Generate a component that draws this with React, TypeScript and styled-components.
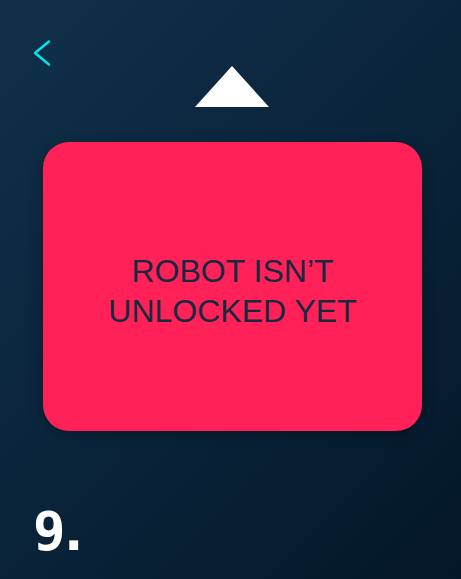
import React from "react";
import styled, { createGlobalStyle } from "styled-components";

const GlobalStyle = createGlobalStyle`
    html, body {
        margin: 0;
        padding: 0;
        background: #061a2e;
    }
`;

const Screen = styled.div`
    width: 461px;
    height: 579px;
    box-sizing: border-box;
    background: linear-gradient(135deg, #10304a 0%, #0a243a 50%, #041729 100%);
    display: flex;
    flex-direction: column;
    padding: 40px 0 0 0;
    overflow: hidden;
    font-family: "Liberation Sans", Arial, sans-serif;
`;

const TopBar = styled.div`
    height: 26px;
    padding-left: 33px;
    display: flex;
    align-items: center;
`;

const BackButton = styled.button`
    border: 0;
    background: transparent;
    padding: 0;
    width: 18px;
    height: 26px;
    cursor: pointer;
    display: flex;
`;

const Arrow = styled.div`
    display: flex;
    justify-content: center;
    padding-left: 2px;
`;

const Card = styled.div`
    margin: 35px 0 0 43px;
    width: 379px;
    height: 289px;
    border-radius: 26px;
    background: #ff2157;
    box-shadow: 0 4px 14px rgba(0, 0, 0, 0.25);
    display: flex;
    align-items: center;
    justify-content: center;
`;

const Message = styled.p`
    margin: 0;
    color: #17293f;
    font-size: 32px;
    line-height: 40px;
    text-align: center;
    text-transform: uppercase;
    padding-top: 8px;
`;

const Level = styled.div`
    margin: 73px 0 0 33px;
    color: #ffffff;
    font-family: "DejaVu Sans Mono", "Liberation Mono", monospace;
    font-weight: bold;
    font-size: 54px;
    line-height: 56px;
    letter-spacing: -8px;
`;

export default function App() {
    return (
        <Screen>
            <GlobalStyle />
            <TopBar>
                <BackButton aria-label="Back">
                    <svg width="18" height="26" viewBox="0 0 18 26">
                        <path
                            d="M16 1.5 L2 13 L16 24.5"
                            fill="none"
                            stroke="#00e4ee"
                            strokeWidth="2.4"
                            strokeLinecap="round"
                            strokeLinejoin="round"
                        />
                    </svg>
                </BackButton>
            </TopBar>
            <Arrow>
                <svg width="74" height="41" viewBox="0 0 74 41">
                    <polygon points="37,0 74,41 0,41" fill="#ffffff" />
                </svg>
            </Arrow>
            <Card>
                <Message>
                    Robot isn’t
                    <br />
                    unlocked yet
                </Message>
            </Card>
            <Level>9.</Level>
        </Screen>
    );
}
